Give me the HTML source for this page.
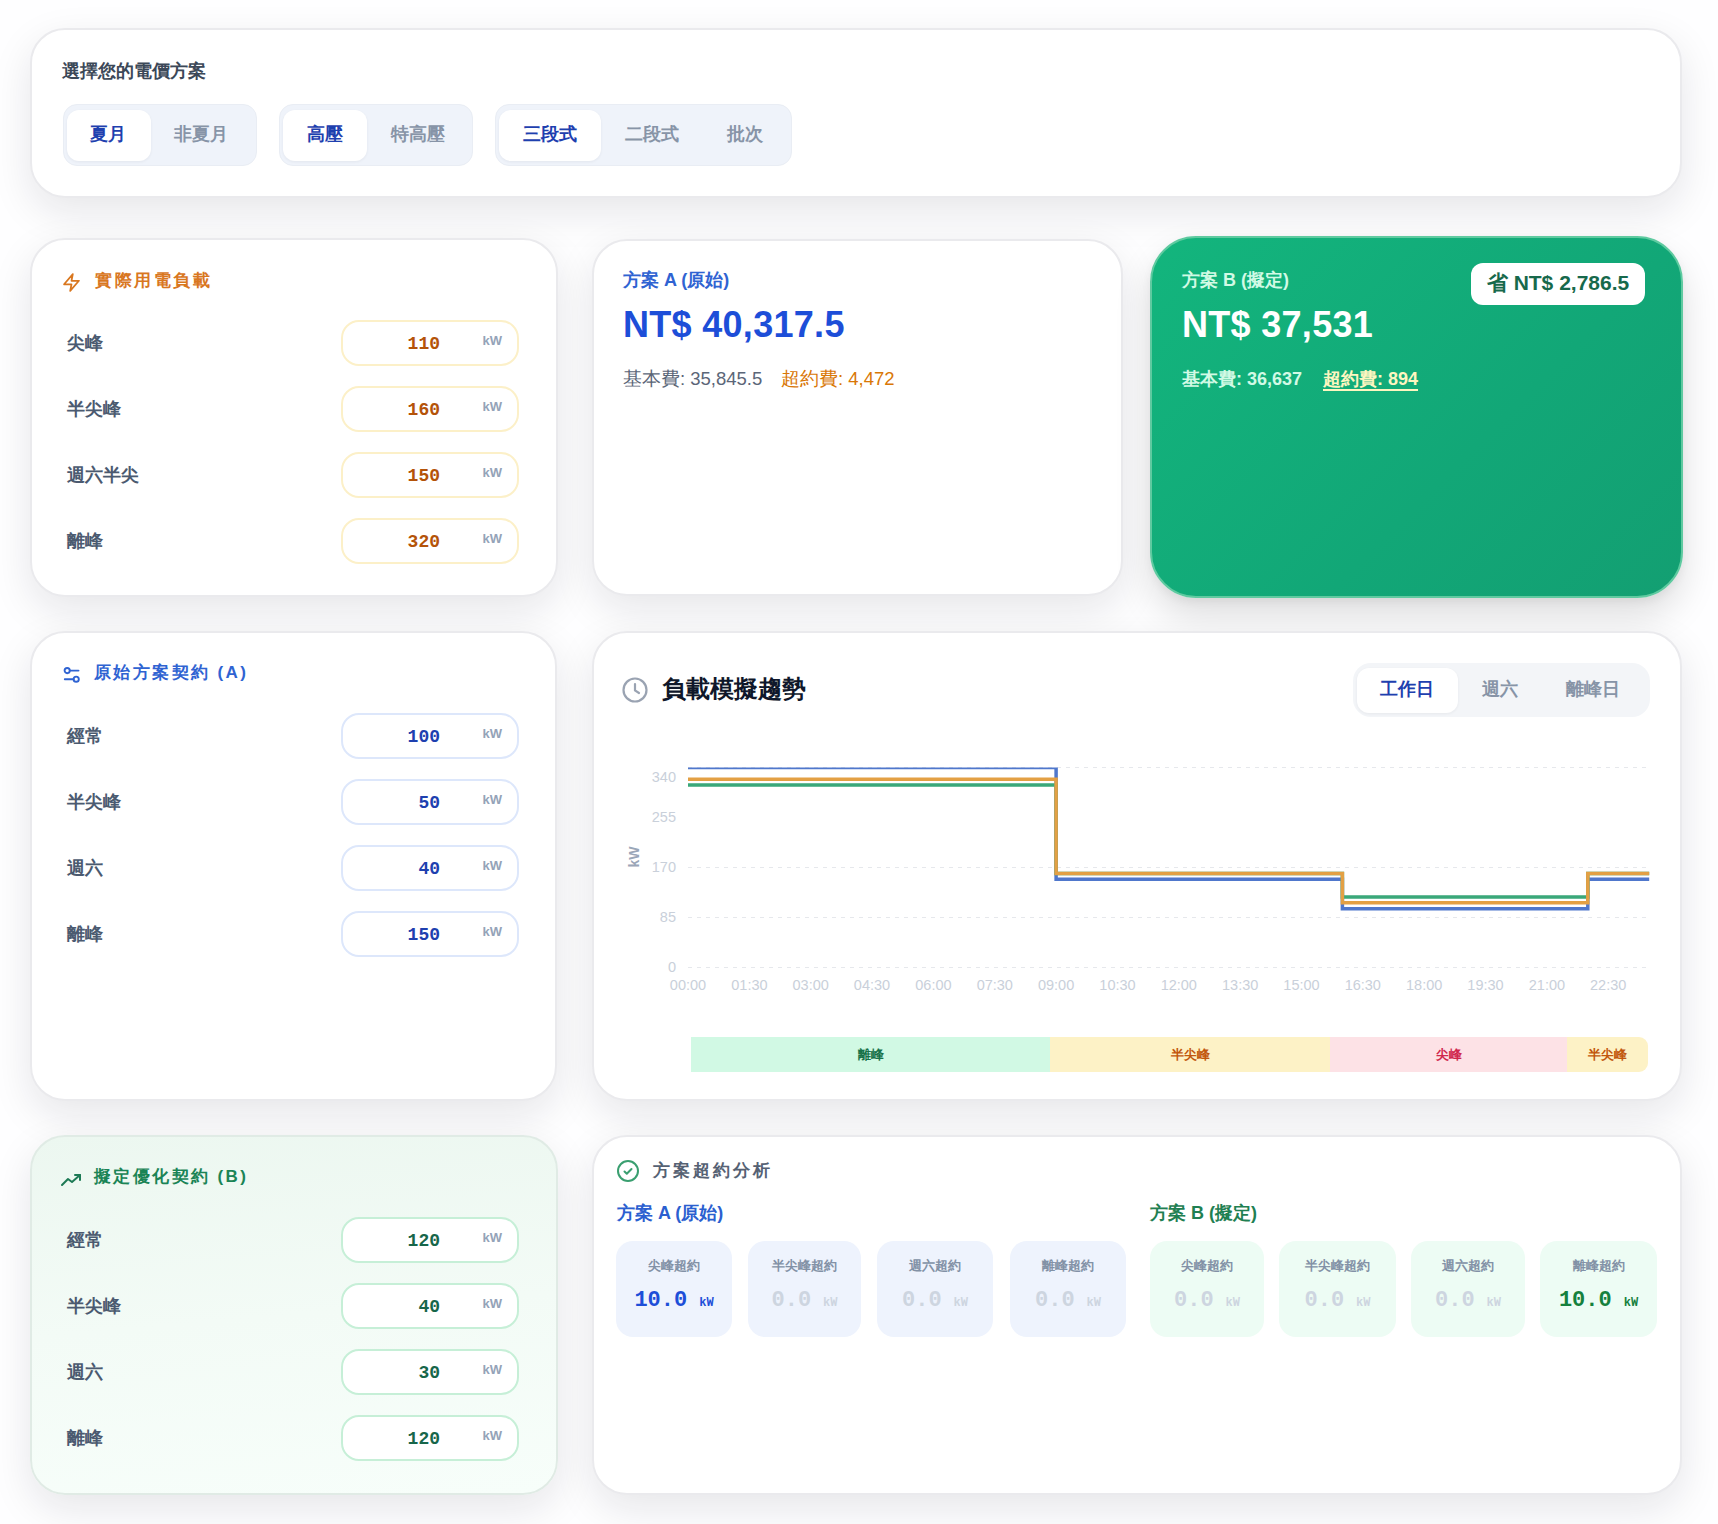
<!DOCTYPE html>
<html><head><meta charset="utf-8">
<style>
*{box-sizing:border-box;margin:0;padding:0}
html,body{width:1718px;height:1524px;overflow:hidden}
body{background:#fefeff;font-family:"Liberation Sans",sans-serif;position:relative}
.a{position:absolute}
.card{position:absolute;background:#fff;border:2px solid #eaeaed;border-radius:35px;box-shadow:0 14px 40px rgba(15,23,42,.1)}
.t{position:absolute;white-space:nowrap;font-weight:bold}
.seg{position:absolute;background:#eff3fa;border:1px solid #e9edf4;border-radius:14px}
.pill{position:absolute;background:#fff;border-radius:12px;box-shadow:0 1px 3px rgba(30,41,59,.06)}
.st{position:absolute;font-size:18px;font-weight:bold;line-height:20px;transform:translateX(-50%);white-space:nowrap;color:#8794a7}
.st.on{color:#1e40af}
.lbl{position:absolute;left:67px;font-size:18px;font-weight:bold;line-height:20px;color:#4b5a70;white-space:nowrap}
.inp{position:absolute;left:341px;width:178px;height:46px;background:#fff;border:2px solid #fdf0c4;border-radius:18px}
.inp .v{position:absolute;right:77px;top:11px;font-family:"Liberation Mono",monospace;font-weight:bold;font-size:18px;line-height:22px}
.inp .u{position:absolute;right:15px;top:12px;font-size:13px;line-height:14px;color:#94a3b8;font-weight:bold}
.ta .inp{border-color:#fcf0c8}.ta .v{color:#b45309}
.tb .inp{border-color:#dde7fb}.tb .v{color:#1e40af}
.tc .inp{border-color:#c6efd7}.tc .v{color:#17664a}
.tile{position:absolute;top:1241px;height:96px;border-radius:17px}
.tile .l{position:absolute;left:0;right:0;top:17px;text-align:center;font-size:13px;font-weight:bold;line-height:16px;color:#8291a6}
.tile .n{position:absolute;left:0;right:0;top:48px;text-align:center;font-family:"Liberation Mono",monospace;font-weight:bold;font-size:22px;line-height:24px;color:#cdd5e0;white-space:nowrap}
.tile .n small{font-size:12px;margin-left:12px}
</style></head><body>

<!-- TOP CARD -->
<div class="card" style="left:30px;top:28px;width:1652px;height:170px"></div>
<div class="t" style="left:62px;top:61px;font-size:18px;line-height:20px;color:#3c4858">選擇您的電價方案</div>
<div class="seg" style="left:63px;top:104px;width:194px;height:62px"></div>
<div class="pill" style="left:67px;top:110px;width:84px;height:51px"></div>
<div class="st on" style="left:108px;top:124px">夏月</div>
<div class="st" style="left:201px;top:124px">非夏月</div>
<div class="seg" style="left:279px;top:104px;width:194px;height:62px"></div>
<div class="pill" style="left:283px;top:110px;width:84px;height:51px"></div>
<div class="st on" style="left:325px;top:124px">高壓</div>
<div class="st" style="left:418px;top:124px">特高壓</div>
<div class="seg" style="left:495px;top:104px;width:297px;height:62px"></div>
<div class="pill" style="left:499px;top:110px;width:102px;height:51px"></div>
<div class="st on" style="left:550px;top:124px">三段式</div>
<div class="st" style="left:652px;top:124px">二段式</div>
<div class="st" style="left:745px;top:124px">批次</div>

<!-- ROW 2 -->
<div class="card ta" style="left:30px;top:238px;width:528px;height:359px"></div>
<div class="ta">
<svg class="a" style="left:61px;top:272px" width="21" height="21" viewBox="0 0 24 24" fill="none" stroke="#d9771f" stroke-width="2" stroke-linejoin="round" stroke-linecap="round"><path d="M13.5 2.5 3.5 14h8.5l-1.5 7.5 10-11.5h-8.5z"/></svg>
<div class="t" style="left:95px;top:271px;font-size:17px;line-height:20px;color:#d9771f;letter-spacing:2.5px">實際用電負載</div>
<div class="lbl" style="top:333px">尖峰</div>
<div class="inp" style="top:320px"><span class="v">110</span><span class="u">kW</span></div>
<div class="lbl" style="top:399px">半尖峰</div>
<div class="inp" style="top:386px"><span class="v">160</span><span class="u">kW</span></div>
<div class="lbl" style="top:465px">週六半尖</div>
<div class="inp" style="top:452px"><span class="v">150</span><span class="u">kW</span></div>
<div class="lbl" style="top:531px">離峰</div>
<div class="inp" style="top:518px"><span class="v">320</span><span class="u">kW</span></div>
</div>

<div class="card" style="left:592px;top:239px;width:531px;height:357px"></div>
<div class="t" style="left:623px;top:270px;font-size:18px;line-height:20px;color:#2f63d2">方案 A (原始)</div>
<div class="t" style="left:623px;top:303px;font-size:36px;line-height:44px;color:#1d4ed8;letter-spacing:0.3px">NT$ 40,317.5</div>
<div class="t" style="left:623px;top:369px;font-size:18.5px;line-height:20px;color:#5b6678;font-weight:normal">基本費: 35,845.5</div>
<div class="t" style="left:781px;top:369px;font-size:18.5px;line-height:20px;color:#d97706;font-weight:normal">超約費: 4,472</div>

<div class="card" style="left:1150px;top:236px;width:533px;height:362px;background:linear-gradient(135deg,#13b57d 0%,#12a777 60%,#139f72 100%);border-color:#5fcaa0;border-radius:46px;box-shadow:0 18px 36px rgba(0,0,0,.13),0 4px 10px rgba(0,0,0,.05)"></div>
<div class="t" style="left:1182px;top:270px;font-size:18px;line-height:20px;color:#d1fae5">方案 B (擬定)</div>
<div class="t" style="left:1182px;top:303px;font-size:36px;line-height:44px;color:#fff;letter-spacing:0.3px">NT$ 37,531</div>
<div class="t" style="left:1182px;top:369px;font-size:18px;line-height:20px;color:#d1fae5">基本費: 36,637</div>
<div class="t" style="left:1323px;top:369px;font-size:18px;line-height:20px;color:#fdf6c0;text-decoration:underline;text-decoration-thickness:2px;text-underline-offset:4px">超約費: 894</div>
<div class="a" style="left:1471px;top:263px;width:174px;height:42px;background:#fff;border-radius:12px"></div>
<div class="t" style="left:1558px;top:271px;transform:translateX(-50%);font-size:21px;line-height:24px;color:#17694c">省 NT$ 2,786.5</div>

<!-- ROW 3 -->
<div class="card" style="left:30px;top:631px;width:527px;height:470px"></div>
<div class="tb">
<svg class="a" style="left:63px;top:666px" width="18" height="18" viewBox="0 0 18 18" fill="none" stroke="#2f63d2" stroke-width="1.9" stroke-linecap="round"><circle cx="4.2" cy="4.6" r="2.6"/><line x1="6.8" y1="4.6" x2="15.5" y2="4.6"/><circle cx="13.2" cy="13.2" r="2.6"/><line x1="1.8" y1="13.2" x2="10.6" y2="13.2"/></svg>
<div class="t" style="left:94px;top:663px;font-size:17px;line-height:20px;color:#2f63d2;letter-spacing:2.4px">原始方案契約 (A)</div>
<div class="lbl" style="top:726px">經常</div>
<div class="inp" style="top:713px"><span class="v">100</span><span class="u">kW</span></div>
<div class="lbl" style="top:792px">半尖峰</div>
<div class="inp" style="top:779px"><span class="v">50</span><span class="u">kW</span></div>
<div class="lbl" style="top:858px">週六</div>
<div class="inp" style="top:845px"><span class="v">40</span><span class="u">kW</span></div>
<div class="lbl" style="top:924px">離峰</div>
<div class="inp" style="top:911px"><span class="v">150</span><span class="u">kW</span></div>
</div>

<div class="card" style="left:592px;top:631px;width:1090px;height:470px"></div>
<svg class="a" style="left:621px;top:676px" width="28" height="28" viewBox="0 0 28 28" fill="none" stroke="#9aa3b2" stroke-width="2.2" stroke-linecap="round"><circle cx="14" cy="14" r="11.5"/><path d="M14 8v6.5l4 2.5"/></svg>
<div class="t" style="left:662px;top:675px;font-size:24px;line-height:28px;color:#0f172a">負載模擬趨勢</div>
<div class="a" style="left:1353px;top:663px;width:297px;height:54px;background:#f3f5f8;border-radius:18px"></div>
<div class="pill" style="left:1357px;top:668px;width:101px;height:45px"></div>
<div class="st on" style="left:1407px;top:679px">工作日</div>
<div class="st" style="left:1500px;top:679px">週六</div>
<div class="st" style="left:1593px;top:679px">離峰日</div>

<!-- ROW 4 -->
<div class="card" style="left:30px;top:1135px;width:528px;height:360px;background:linear-gradient(175deg,#ecf7f0 0%,#f3fbf6 50%,#f7fefa 100%);border-color:#e0ebe5"></div>
<div class="tc">
<svg class="a" style="left:60px;top:1167px" width="24" height="24" viewBox="0 0 24 24" fill="none" stroke="#1d7a55" stroke-width="2" stroke-linecap="round" stroke-linejoin="round"><path d="M2 18l6-6 4 3 8-7"/><path d="M15 8h5v5"/></svg>
<div class="t" style="left:94px;top:1167px;font-size:17px;line-height:20px;color:#1a8456;letter-spacing:2.4px">擬定優化契約 (B)</div>
<div class="lbl" style="top:1230px">經常</div>
<div class="inp" style="top:1217px"><span class="v">120</span><span class="u">kW</span></div>
<div class="lbl" style="top:1296px">半尖峰</div>
<div class="inp" style="top:1283px"><span class="v">40</span><span class="u">kW</span></div>
<div class="lbl" style="top:1362px">週六</div>
<div class="inp" style="top:1349px"><span class="v">30</span><span class="u">kW</span></div>
<div class="lbl" style="top:1428px">離峰</div>
<div class="inp" style="top:1415px"><span class="v">120</span><span class="u">kW</span></div>
</div>

<div class="card" style="left:592px;top:1135px;width:1090px;height:360px"></div>
<svg class="a" style="left:616px;top:1159px" width="24" height="24" viewBox="0 0 24 24" fill="none" stroke="#3a9f70" stroke-width="2" stroke-linecap="round" stroke-linejoin="round"><circle cx="12" cy="12" r="10"/><path d="M8.5 12.5l2.3 2.2 4.7-4.7"/></svg>
<div class="t" style="left:653px;top:1161px;font-size:17px;line-height:20px;color:#556173;letter-spacing:3px">方案超約分析</div>
<div class="t" style="left:617px;top:1203px;font-size:18px;line-height:20px;color:#2b5fd0">方案 A (原始)</div>
<div class="t" style="left:1150px;top:1203px;font-size:18px;line-height:20px;color:#1f8052">方案 B (擬定)</div>

<div class="tile" style="left:616px;width:116px;background:#eef3fd"><div class="l">尖峰超約</div><div class="n" style="color:#1d4ed8">10.0<small>kW</small></div></div>
<div class="tile" style="left:748px;width:113px;background:#eef3fd"><div class="l">半尖峰超約</div><div class="n">0.0<small>kW</small></div></div>
<div class="tile" style="left:877px;width:116px;background:#eef3fd"><div class="l">週六超約</div><div class="n">0.0<small>kW</small></div></div>
<div class="tile" style="left:1010px;width:116px;background:#eef3fd"><div class="l">離峰超約</div><div class="n">0.0<small>kW</small></div></div>

<div class="tile" style="left:1150px;width:114px;background:#edfcf4"><div class="l">尖峰超約</div><div class="n">0.0<small>kW</small></div></div>
<div class="tile" style="left:1279px;width:117px;background:#edfcf4"><div class="l">半尖峰超約</div><div class="n">0.0<small>kW</small></div></div>
<div class="tile" style="left:1411px;width:114px;background:#edfcf4"><div class="l">週六超約</div><div class="n">0.0<small>kW</small></div></div>
<div class="tile" style="left:1540px;width:117px;background:#edfcf4"><div class="l">離峰超約</div><div class="n" style="color:#15803d">10.0<small>kW</small></div></div>

<!--CHART-->
<svg class="a" style="left:0;top:0" width="1718" height="1524" viewBox="0 0 1718 1524">
<defs><clipPath id="pc"><rect x="686" y="767.5" width="970" height="210"/></clipPath></defs>
<line x1="688" y1="767.5" x2="1649" y2="767.5" stroke="#e6e8ec" stroke-width="1" stroke-dasharray="4 5"/>
<line x1="688" y1="867.5" x2="1649" y2="867.5" stroke="#e6e8ec" stroke-width="1" stroke-dasharray="4 5"/>
<line x1="688" y1="917.5" x2="1649" y2="917.5" stroke="#e6e8ec" stroke-width="1" stroke-dasharray="4 5"/>
<line x1="688" y1="967.5" x2="1649" y2="967.5" stroke="#e6e8ec" stroke-width="1" stroke-dasharray="4 5"/>
<text x="676" y="781.5" text-anchor="end" font-size="14.5" fill="#c9d0da">340</text>
<text x="676" y="821.5" text-anchor="end" font-size="14.5" fill="#c9d0da">255</text>
<text x="676" y="872.0" text-anchor="end" font-size="14.5" fill="#c9d0da">170</text>
<text x="676" y="922.0" text-anchor="end" font-size="14.5" fill="#c9d0da">85</text>
<text x="676" y="972.0" text-anchor="end" font-size="14.5" fill="#c9d0da">0</text>
<text transform="translate(639 857) rotate(-90)" text-anchor="middle" font-size="14" font-weight="bold" fill="#9aa6b8">kW</text>
<text x="688.0" y="990" text-anchor="middle" font-size="14.5" fill="#c9d0da">00:00</text>
<text x="749.4" y="990" text-anchor="middle" font-size="14.5" fill="#c9d0da">01:30</text>
<text x="810.7" y="990" text-anchor="middle" font-size="14.5" fill="#c9d0da">03:00</text>
<text x="872.0" y="990" text-anchor="middle" font-size="14.5" fill="#c9d0da">04:30</text>
<text x="933.4" y="990" text-anchor="middle" font-size="14.5" fill="#c9d0da">06:00</text>
<text x="994.8" y="990" text-anchor="middle" font-size="14.5" fill="#c9d0da">07:30</text>
<text x="1056.1" y="990" text-anchor="middle" font-size="14.5" fill="#c9d0da">09:00</text>
<text x="1117.5" y="990" text-anchor="middle" font-size="14.5" fill="#c9d0da">10:30</text>
<text x="1178.8" y="990" text-anchor="middle" font-size="14.5" fill="#c9d0da">12:00</text>
<text x="1240.2" y="990" text-anchor="middle" font-size="14.5" fill="#c9d0da">13:30</text>
<text x="1301.5" y="990" text-anchor="middle" font-size="14.5" fill="#c9d0da">15:00</text>
<text x="1362.8" y="990" text-anchor="middle" font-size="14.5" fill="#c9d0da">16:30</text>
<text x="1424.2" y="990" text-anchor="middle" font-size="14.5" fill="#c9d0da">18:00</text>
<text x="1485.5" y="990" text-anchor="middle" font-size="14.5" fill="#c9d0da">19:30</text>
<text x="1546.9" y="990" text-anchor="middle" font-size="14.5" fill="#c9d0da">21:00</text>
<text x="1608.2" y="990" text-anchor="middle" font-size="14.5" fill="#c9d0da">22:30</text>
<g clip-path="url(#pc)" fill="none" stroke-width="3.5" stroke-linejoin="miter">
<path d="M688.0 767.5H1056.1V879.3H1342.4V908.7H1587.8V879.3H1649.2" stroke="#4f77cc"/>
<path d="M688.0 785.1H1056.1V873.4H1342.4V896.9H1587.8V873.4H1649.2" stroke="#3aa87a"/>
<path d="M688.0 779.3H1056.1V873.4H1342.4V902.8H1587.8V873.4H1649.2" stroke="#e3a044"/>
</g></svg>
<div class="a" style="left:691px;top:1037px;width:957px;height:35px;border-radius:0 9px 9px 0;overflow:hidden;font-size:13px;font-weight:bold;line-height:35px;text-align:center">
<div class="a" style="left:0;top:0;width:359px;height:35px;background:#d1f9e4;color:#17724a">離峰</div>
<div class="a" style="left:359px;top:0;width:280px;height:35px;background:#fdf2c6;color:#c2570c">半尖峰</div>
<div class="a" style="left:639px;top:0;width:237px;height:35px;background:#fde2e6;color:#d0274d">尖峰</div>
<div class="a" style="left:876px;top:0;width:81px;height:35px;background:#fdf2c6;color:#c2570c">半尖峰</div>
</div>
<!--/CHART-->
</body></html>
